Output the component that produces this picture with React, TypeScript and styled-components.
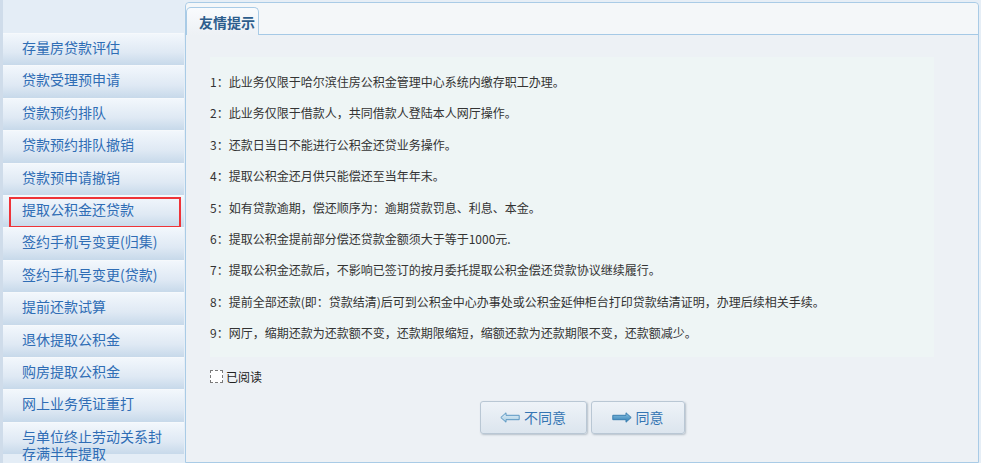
import React, { useState } from "react";
import styled, { createGlobalStyle } from "styled-components";

const GlobalStyle = createGlobalStyle`
  html, body {
    margin: 0;
    padding: 0;
    background: #e6eef6;
    font-family: "Noto Sans CJK SC", "Noto Sans", sans-serif;
  }
`;

const Page = styled.div`
  display: flex;
  height: 463px;
  overflow: hidden;
`;

const Sidebar = styled.aside`
  width: 184px;
  flex-shrink: 0;
  box-sizing: border-box;
  padding-top: 33px;
  border-left: 3px solid #cfdcea;
  background: #e4edf6;
`;

const MenuItem = styled.div<{ $active?: boolean }>`
  position: relative;
  box-sizing: border-box;
  height: 32.4px;
  padding: 5px 10px 0 19px;
  line-height: 17px;
  font-size: 14px;
  color: #2f6db5;
  background: linear-gradient(#f2f7fc, #dfe9f4 60%, #c7d9ea);
  border-top: 1px solid #f6f9fc;

  &::after {
    content: "";
    display: ${(p) => (p.$active ? "block" : "none")};
    position: absolute;
    left: 6px;
    right: 3px;
    top: 1px;
    bottom: -1px;
    border: 2px solid #ee3338;
  }
`;

const Main = styled.section`
  flex: 1;
  margin: 2px 2px 0 1px;
  border: 1px solid #a9cbe6;
  border-radius: 4px 4px 0 0;
  background: #edf1f5;
  display: flex;
  flex-direction: column;
`;

const TabBar = styled.div`
  height: 31px;
  background: #f4f7f9;
  border-bottom: 1px solid #a5c9e6;
  border-radius: 4px 4px 0 0;
  display: flex;
  align-items: flex-end;
`;

const Tab = styled.div`
  margin-bottom: -1px;
  width: 73px;
  height: 28px;
  box-sizing: border-box;
  border: 1px solid #a9cbe6;
  border-bottom: none;
  border-radius: 5px 5px 0 0;
  background: linear-gradient(#f9fbfd, #edf1f5);
  font-size: 14px;
  font-weight: bold;
  color: #2d5e8d;
  padding-left: 12px;
  line-height: 28px;
`;

const Content = styled.div`
  padding: 22px 0 0 24px;
  display: flex;
  flex-direction: column;
`;

const Notice = styled.div`
  width: 724px;
  background: #eef5f5;
  padding: 9px 0 8px;
`;

const NoticeLine = styled.p`
  margin: 0;
  font-size: 12px;
  line-height: 31.4px;
  color: #333;
`;

const ReadRow = styled.label`
  display: flex;
  align-items: center;
  margin-top: 11px;
  font-size: 12px;
  color: #222;
  cursor: pointer;
`;

const CheckBox = styled.span<{ $checked: boolean }>`
  width: 11px;
  height: 11px;
  border: 1px dashed #7a7a7a;
  background: #fff;
  margin-right: 3px;
  font-size: 10px;
  line-height: 11px;
  text-align: center;
  color: #222;
`;

const ButtonRow = styled.div`
  display: flex;
  justify-content: center;
  gap: 4px;
  margin-top: 16px;
  padding-right: 24px;
`;

const Button = styled.button<{ $w: number }>`
  width: ${(p) => p.$w}px;
  height: 33px;
  display: flex;
  align-items: center;
  justify-content: center;
  gap: 4px;
  border: 1px solid #b9c7d4;
  border-radius: 3px;
  background: linear-gradient(#eef3f8, #dce5ee);
  box-shadow: 1px 1px 2px rgba(80, 100, 120, 0.35);
  font-family: "Noto Sans CJK SC", sans-serif;
  font-size: 14px;
  color: #3575b3;
  cursor: pointer;
  padding: 0;
`;

const LeftArrow = () => (
  <svg width="20" height="11" viewBox="0 0 20 11">
    <defs>
      <linearGradient id="la" x1="0" y1="0" x2="0" y2="1">
        <stop offset="0" stopColor="#e2f0f8" />
        <stop offset="1" stopColor="#a7cce2" />
      </linearGradient>
    </defs>
    <path
      d="M0.8 5.5 L6 0.8 L6 3.3 L19.2 3.3 L19.2 7.7 L6 7.7 L6 10.2 Z"
      fill="url(#la)"
      stroke="#5b97c2"
      strokeWidth="1"
    />
  </svg>
);

const RightArrow = () => (
  <svg width="20" height="11" viewBox="0 0 20 11">
    <defs>
      <linearGradient id="ra" x1="0" y1="0" x2="0" y2="1">
        <stop offset="0" stopColor="#8cc3e3" />
        <stop offset="1" stopColor="#2f7db3" />
      </linearGradient>
    </defs>
    <path
      d="M19.2 5.5 L14 0.8 L14 3.3 L0.8 3.3 L0.8 7.7 L14 7.7 L14 10.2 Z"
      fill="url(#ra)"
      stroke="#3a7fb0"
      strokeWidth="1"
    />
  </svg>
);

const menus = [
  "存量房贷款评估",
  "贷款受理预申请",
  "贷款预约排队",
  "贷款预约排队撤销",
  "贷款预申请撤销",
  "提取公积金还贷款",
  "签约手机号变更(归集)",
  "签约手机号变更(贷款)",
  "提前还款试算",
  "退休提取公积金",
  "购房提取公积金",
  "网上业务凭证重打",
  "与单位终止劳动关系封存满半年提取",
];

const notices = [
  "1：此业务仅限于哈尔滨住房公积金管理中心系统内缴存职工办理。",
  "2：此业务仅限于借款人，共同借款人登陆本人网厅操作。",
  "3：还款日当日不能进行公积金还贷业务操作。",
  "4：提取公积金还月供只能偿还至当年年末。",
  "5：如有贷款逾期，偿还顺序为：逾期贷款罚息、利息、本金。",
  "6：提取公积金提前部分偿还贷款金额须大于等于1000元.",
  "7：提取公积金还款后，不影响已签订的按月委托提取公积金偿还贷款协议继续履行。",
  "8：提前全部还款(即：贷款结清)后可到公积金中心办事处或公积金延伸柜台打印贷款结清证明，办理后续相关手续。",
  "9：网厅，缩期还款为还款额不变，还款期限缩短，缩额还款为还款期限不变，还款额减少。",
];

const App = () => {
  const [read, setRead] = useState<boolean>(false);

  return (
    <>
      <GlobalStyle />
      <Page>
        <Sidebar>
          {menus.map((m, i) => (
            <MenuItem key={m} $active={i === 5}>
              {m}
            </MenuItem>
          ))}
        </Sidebar>
        <Main>
          <TabBar>
            <Tab>友情提示</Tab>
          </TabBar>
          <Content>
            <Notice>
              {notices.map((n) => (
                <NoticeLine key={n}>{n}</NoticeLine>
              ))}
            </Notice>
            <ReadRow onClick={() => setRead(!read)}>
              <CheckBox $checked={read}>{read ? "✓" : ""}</CheckBox>
              已阅读
            </ReadRow>
            <ButtonRow>
              <Button $w={107}>
                <LeftArrow />
                不同意
              </Button>
              <Button $w={94}>
                <RightArrow />
                同意
              </Button>
            </ButtonRow>
          </Content>
        </Main>
      </Page>
    </>
  );
};

export default App;
